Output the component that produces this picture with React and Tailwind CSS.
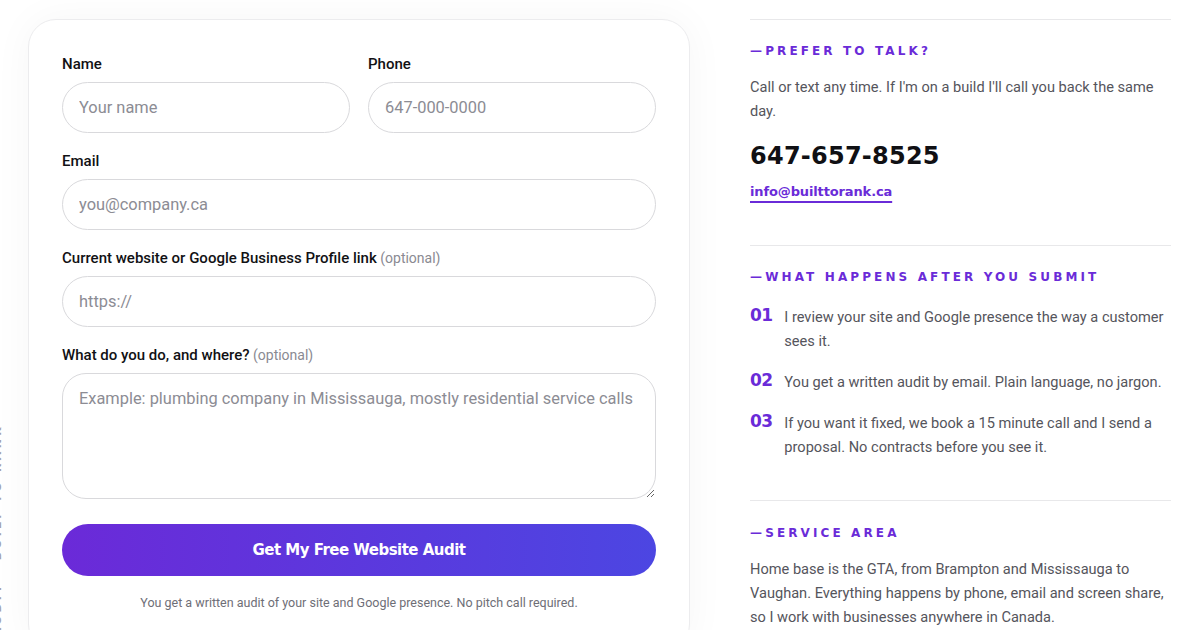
const body = { fontFamily: 'Roboto, "Liberation Sans", Arial, sans-serif' };
const display = { fontFamily: '"DejaVu Sans", Verdana, sans-serif' };

function Field({ label, optional, children }) {
  return (
    <div className="flex flex-col">
      <label className="mb-2 text-[15px] font-medium leading-5 text-[#111114]">
        {label}
        {optional && <span className="text-[14px] font-normal text-[#8a8a92]"> (optional)</span>}
      </label>
      {children}
    </div>
  );
}

function TextInput({ placeholder }) {
  return (
    <input
      type="text"
      placeholder={placeholder}
      className="h-[51px] w-full rounded-full border border-[#d9d9dc] bg-white px-[16px] text-[16.4px] text-[#111] outline-none placeholder:text-[#8c8c94]"
    />
  );
}

function SectionHeading({ children }) {
  return (
    <h3
      style={display}
      className="text-[12px] font-bold uppercase leading-4 tracking-[0.26em] text-[#6a2bd8]"
    >
      —{children}
    </h3>
  );
}

const STEPS = [
  { n: '01', text: 'I review your site and Google presence the way a customer sees it.' },
  { n: '02', text: 'You get a written audit by email. Plain language, no jargon.' },
  { n: '03', text: 'If you want it fixed, we book a 15 minute call and I send a proposal. No contracts before you see it.' },
];

export default function App() {
  return (
    <div style={body} className="relative h-[630px] overflow-hidden bg-white">
      <div
        style={display}
        className="absolute left-[-10px] top-[424px] rotate-180 whitespace-nowrap text-[11px] font-bold uppercase tracking-[0.3em] text-[#a3a3ae] [writing-mode:vertical-rl]"
      >
        Free audit · Built to rank
      </div>

      <div className="flex pl-[28px] pt-[19px]">
        <div className="w-[662px] shrink-0 rounded-[28px] border border-[#ececee] bg-white px-[33px] pb-10 pt-[34px] shadow-[0_0_40px_rgba(0,0,0,0.04)]">
          <form className="flex flex-col gap-[18px]" onSubmit={(e) => e.preventDefault()}>
            <div className="grid grid-cols-2 gap-[18px]">
              <Field label="Name">
                <TextInput placeholder="Your name" />
              </Field>
              <Field label="Phone">
                <TextInput placeholder="647-000-0000" />
              </Field>
            </div>
            <Field label="Email">
              <TextInput placeholder="you@company.ca" />
            </Field>
            <Field label="Current website or Google Business Profile link" optional>
              <TextInput placeholder="https://" />
            </Field>
            <Field label="What do you do, and where?" optional>
              <textarea
                placeholder="Example: plumbing company in Mississauga, mostly residential service calls"
                className="h-[126px] w-full rounded-[24px] border border-[#d9d9dc] bg-white px-[16px] py-[13px] text-[16.4px] leading-6 text-[#111] outline-none placeholder:text-[#8c8c94]"
              />
            </Field>
            <button
              type="submit"
              style={display}
              className="mt-[7px] h-[52px] w-full rounded-full bg-[linear-gradient(90deg,#6b2ad8,#4c46e2)] text-[15px] font-bold tracking-[-0.035em] text-white"
            >
              Get My Free Website Audit
            </button>
          </form>
          <p className="mt-[19px] text-center text-[12.5px] leading-4 text-[#6e6e76]">
            You get a written audit of your site and Google presence. No pitch call required.
          </p>
        </div>

        <aside className="ml-[60px] w-[421px] shrink-0">
          <section className="border-t border-[#e8e8ea] pb-[42px] pt-[23px]">
            <SectionHeading>Prefer to talk?</SectionHeading>
            <p className="mt-4 text-[14.6px] leading-6 text-[#55555c]">
              Call or text any time. If I'm on a build I'll call you back the same day.
            </p>
            <p style={display} className="mt-[17px] text-[24px] font-bold leading-8 tracking-[0.01em] text-[#101014]">
              647-657-8525
            </p>
            <a
              href="#"
              style={display}
              className="mt-[10px] inline-block text-[13px] font-bold leading-5 tracking-[-0.01em] text-[#6a2bd8] underline decoration-[1.5px] underline-offset-[5px]"
            >
              info@builttorank.ca
            </a>
          </section>

          <section className="border-t border-[#e8e8ea] pb-[41px] pt-[23px]">
            <SectionHeading>What happens after you submit</SectionHeading>
            <ol className="mt-5 flex flex-col gap-[17px]">
              {STEPS.map((s) => (
                <li key={s.n} className="flex items-start gap-[12px]">
                  <span style={display} className="shrink-0 text-[17px] font-bold leading-5 tracking-[-0.04em] text-[#6a2bd8]">
                    {s.n}
                  </span>
                  <span className="min-w-0 flex-1 text-[14.6px] leading-6 text-[#55555c]">{s.text}</span>
                </li>
              ))}
            </ol>
          </section>

          <section className="border-t border-[#e8e8ea] pt-[24px]">
            <SectionHeading>Service area</SectionHeading>
            <p className="mt-4 text-[14.6px] leading-6 text-[#55555c]">
              Home base is the GTA, from Brampton and Mississauga to Vaughan. Everything happens by phone, email and screen share, so I work with businesses anywhere in Canada.
            </p>
          </section>
        </aside>
      </div>
    </div>
  );
}
